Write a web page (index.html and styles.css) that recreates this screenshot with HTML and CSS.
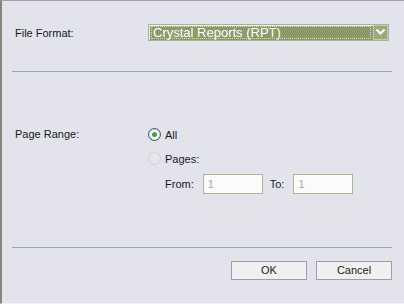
FILE: index.html
```html
<!DOCTYPE html>
<html>
<head>
<meta charset="utf-8">
<link rel="stylesheet" href="styles.css">
</head>
<body>
<div class="dialog">
  <div class="row format">
    <span class="label">File Format:</span>
    <div class="select">
      <div class="value">Crystal Reports (RPT)</div>
      <div class="arrow">
        <svg width="11" height="8" viewBox="0 0 11 8"><path d="M1.5 1.5 L5.5 5.5 L9.5 1.5" fill="none" stroke="#ffffff" stroke-width="2.2"/></svg>
      </div>
    </div>
  </div>
  <div class="sep"></div>
  <div class="row range">
    <span class="label">Page Range:</span>
    <div class="opts">
      <div class="opt"><span class="radio on"><span class="dot"></span></span><span>All</span></div>
      <div class="opt"><span class="radio off"></span><span>Pages:</span></div>
      <div class="fromto">
        <span>From:</span><div class="inp">1</div>
        <span class="to">To:</span><div class="inp">1</div>
      </div>
    </div>
  </div>
  <div class="sep sep2"></div>
  <div class="buttons">
    <div class="btn">OK</div>
    <div class="btn">Cancel</div>
  </div>
</div>
</body>
</html>
```
FILE: styles.css
```css
html, body {
  margin: 0;
  padding: 0;
}
body {
  background: #e3e3ec;
  font-family: "Liberation Sans", Arial, sans-serif;
  font-size: 11px;
  color: #1a1a1a;
}
.dialog {
  width: 404px;
  height: 304px;
  box-sizing: border-box;
  border-left: 2px solid #86867c;
  border-top: 1px solid #a4a49c;
  border-bottom: 1px solid #f4f4f8;
  background: #e3e3ec;
  padding: 0 12px 0 10px;
}
.row {
  display: flex;
  align-items: center;
}
.label {
  padding-left: 3px;
  width: 133px;
}
.format {
  margin-top: 23px;
}
.select {
  width: 241px;
  height: 17px;
  box-sizing: border-box;
  border: 1px solid #aab295;
  background: #8c9a6a;
  display: flex;
  align-items: center;
  padding: 1px 1px 1px 2px;
  box-shadow: inset 1px 1px 0 #f2f2ea;
}
.value {
  flex: 1;
  height: 13px;
  box-sizing: border-box;
  border: 1px dotted #d8dccb;
  color: #ffffff;
  line-height: 11px;
  padding-left: 1px;
  font-size: 13px;
  margin-right: 2px;
}
.arrow {
  width: 15px;
  height: 15px;
  box-sizing: border-box;
  border: 1px solid #c4cbb4;
  background: #9aa87c;
  display: flex;
  align-items: center;
  justify-content: center;
  margin-top: -1px;
  margin-right: -1px;
}
.sep {
  height: 1px;
  background: #a2a2b6;
  margin-top: 30px;
  width: 380px;
}
.range {
  align-items: flex-start;
  margin-top: 56px;
}
.range .label {
  line-height: 13px;
}
.opts {
  display: flex;
  flex-direction: column;
}
.opt {
  display: flex;
  align-items: center;
  height: 13px;
  margin-bottom: 11px;
  gap: 4px;
}
.radio {
  width: 13px;
  height: 13px;
  box-sizing: border-box;
  border-radius: 50%;
  display: flex;
  align-items: center;
  justify-content: center;
}
.radio.on {
  border: 1px solid #3c4d6a;
  background: #ffffff;
  box-shadow: inset 0 0 0 1px #d8dde6;
}
.radio .dot {
  width: 5px;
  height: 5px;
  border-radius: 50%;
  background: #3aa33d;
}
.radio.off {
  border: 1px solid #d0d0d8;
  background: #e6e6ec;
}
.fromto {
  display: flex;
  align-items: center;
  padding-left: 17px;
  margin-top: -2px;
}
.inp {
  width: 60px;
  height: 20px;
  box-sizing: border-box;
  border: 1px solid #aeb59e;
  background: #fbfbfa;
  color: #a8a8a8;
  line-height: 18px;
  padding-left: 4px;
  margin-left: 9px;
}
.to {
  margin-left: 7px;
}
.to + .inp {
  margin-left: 9px;
}
.sep2 {
  margin-top: 53px;
}
.buttons {
  display: flex;
  justify-content: flex-end;
  gap: 9px;
  margin-top: 13px;
  width: 380px;
}
.btn {
  width: 76px;
  height: 19px;
  box-sizing: border-box;
  border: 1px solid #9d9db0;
  background: #f0f0ee;
  text-align: center;
  line-height: 17px;
  color: #222;
}
```
